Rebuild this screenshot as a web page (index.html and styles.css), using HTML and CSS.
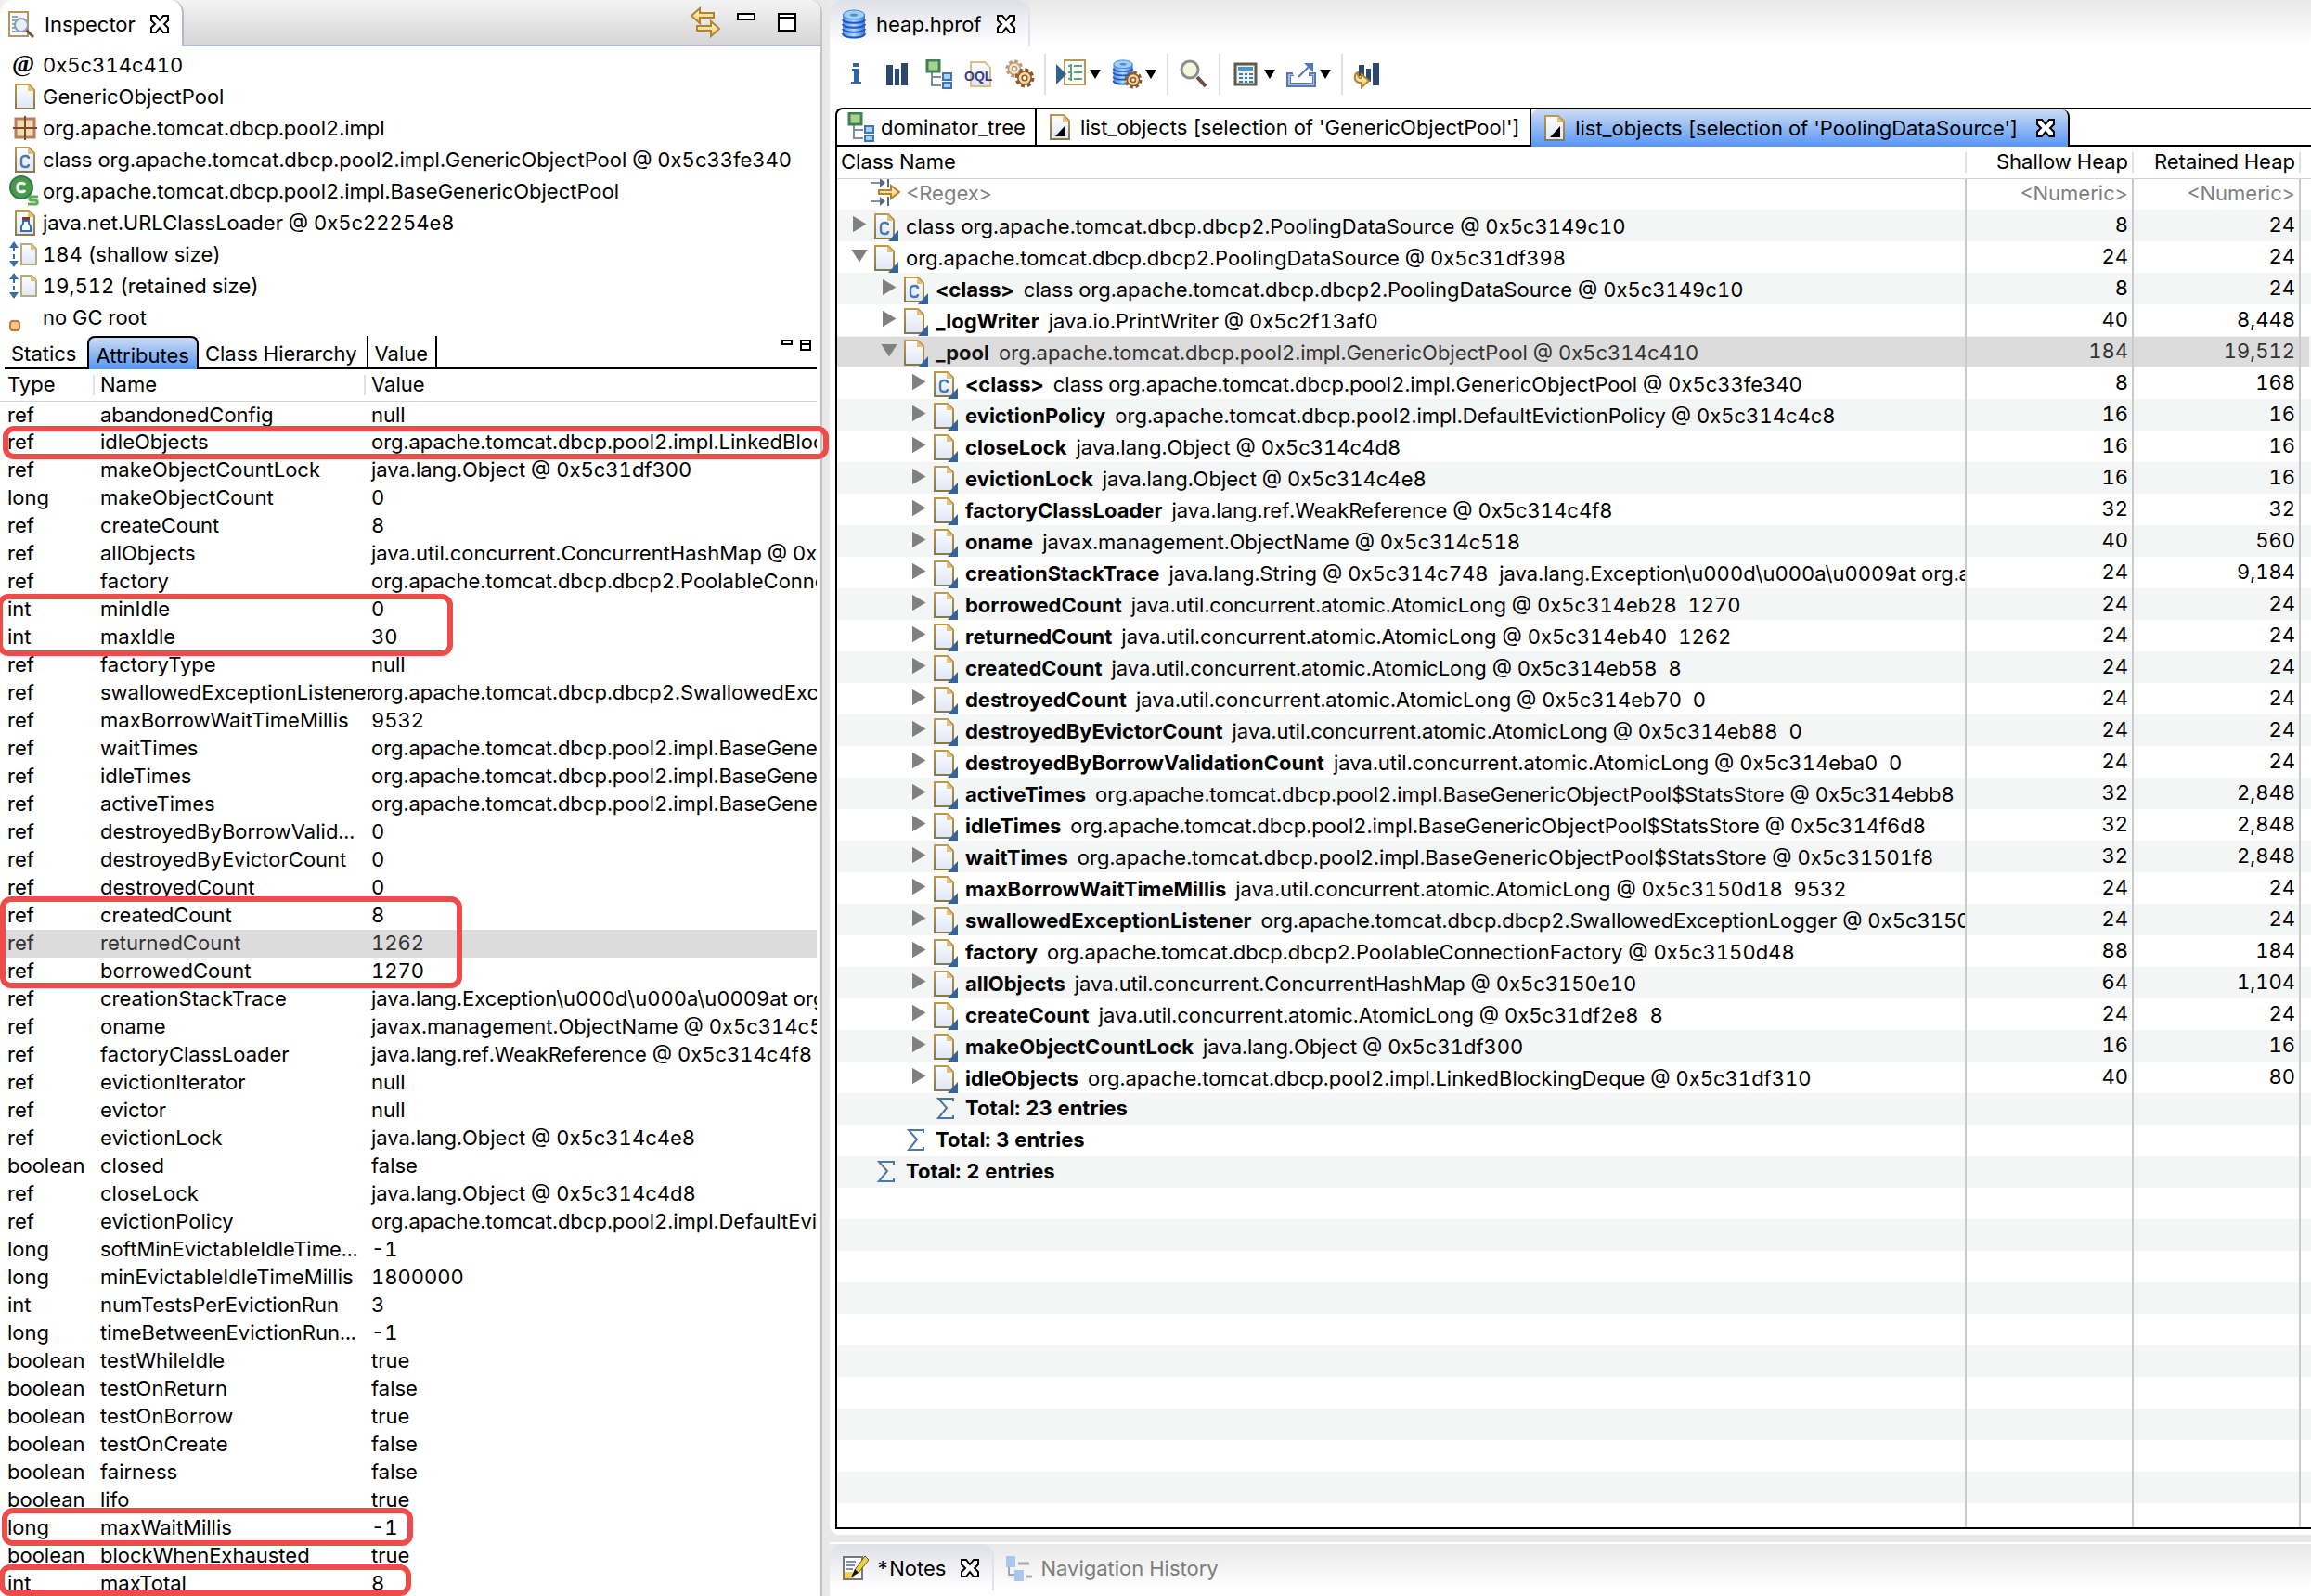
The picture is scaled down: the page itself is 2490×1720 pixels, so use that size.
FILE: index.html
```
<!DOCTYPE html>
<html lang="en">
<head>
<meta charset="utf-8">
<title>Memory Analyzer - heap.hprof</title>
<link rel="stylesheet" href="styles.css">
</head>
<body>
<svg class="sprite" aria-hidden="true">
  <defs>
    <linearGradient id="g-page" x1="0" y1="0" x2="0" y2="1"><stop offset="0" stop-color="#fdfdff"/><stop offset="1" stop-color="#dfe6f5"/></linearGradient>
    <linearGradient id="g-edge" x1="0" y1="0" x2="0" y2="1"><stop offset="0" stop-color="#bd9a4a"/><stop offset="1" stop-color="#85794f"/></linearGradient>
    <linearGradient id="g-gold" x1="0" y1="0" x2="0" y2="1"><stop offset="0" stop-color="#fffbe6"/><stop offset="1" stop-color="#efc75e"/></linearGradient>
    <linearGradient id="g-db" x1="0" y1="0" x2="1" y2="0"><stop offset="0" stop-color="#4e8fe0"/><stop offset=".5" stop-color="#b4dcf6"/><stop offset="1" stop-color="#3a78d6"/></linearGradient>
    <symbol id="doc" viewBox="0 0 32 32"><path d="M7 3h14l6 6v20H7z" fill="url(#g-page)" stroke="url(#g-edge)" stroke-width="2"/><path d="M20 3v7h7z" fill="#e2c27a"/></symbol>
    <symbol id="letter-c" viewBox="0 0 32 32"><path d="M21 15c0-2-1-3-3-3h-1c-3 0-4 2-4 4v4c0 3 1 4 4 4h1c2 0 3-1 3-3" fill="none" stroke="#4a7ab5" stroke-width="2.4"/></symbol>
    <symbol id="out" viewBox="0 0 32 32"><path d="M32 20v12H21z" fill="#35639b"/></symbol>
    <symbol id="ref-doc" viewBox="0 0 32 32"><use href="#doc"/><use href="#out"/></symbol>
    <symbol id="class-doc" viewBox="0 0 32 32"><use href="#doc"/><use href="#letter-c"/></symbol>
    <symbol id="ref-class" viewBox="0 0 32 32"><use href="#class-doc"/><use href="#out"/></symbol>
    <symbol id="sum" viewBox="0 0 32 32"><path d="M27 9V6H11l9 10-9 11h16v-3" fill="none" stroke="#4a76a8" stroke-width="2"/></symbol>
    <symbol id="query-doc" viewBox="0 0 32 32"><use href="#doc"/><path d="M23 14v12H12z" fill="#000"/></symbol>
    <symbol id="close" viewBox="0 0 20 20"><path d="M1 1h5l4 5 4-5h5v5l-4 4 4 4v5h-5l-4-5-4 5H1v-5l4-4-4-4z" fill="#fff" stroke="#000" stroke-width="2"/></symbol>
    <symbol id="db" viewBox="0 0 32 32"><path d="M4 5v22c0 6 24 6 24 0V5z" fill="url(#g-db)"/><path d="M4 11c0 5 24 5 24 0M4 16c0 5 24 5 24 0M4 21c0 5 24 5 24 0M4 26c0 6 24 6 24 0" fill="none" stroke="#1f55c4" stroke-width="2"/><ellipse cx="16" cy="6" rx="11.500" ry="5" fill="#9fd0f2" stroke="#3c7fd8"/><ellipse cx="16" cy="6" rx="4" ry="1.500" fill="#4f8cc0"/></symbol>
    <symbol id="tree" viewBox="0 0 32 32"><path d="M10 13v15h10M10 19h10" fill="none" stroke="#7f8da3" stroke-width="2"/><path d="M5 1h13v12H5z" fill="#a9d18e" stroke="#3f8157" stroke-width="3"/><path d="M22 15h9v7h-9zM22 25h9v6h-9z" fill="#a5d3f5" stroke="#3f74bb" stroke-width="2"/></symbol>
    <symbol id="gear" viewBox="0 0 20 20"><circle cx="10" cy="10" r="8" fill="none" stroke="#8a5a2c" stroke-width="3" stroke-dasharray="3.600 2.680"/><circle cx="10" cy="10" r="6.500" fill="#f7d795" stroke="#8a5a2c" stroke-width="1.500"/><circle cx="10" cy="10" r="2.500" fill="#fff" stroke="#8a5a2c" stroke-width="1.500"/></symbol>
    <symbol id="size" viewBox="0 0 32 32"><path d="M5 8v16" stroke="#3c6ea5" stroke-width="2" stroke-dasharray="5 3"/><path d="M5 2l5 7H0zM5 30l5-7H0z" fill="#3c6ea5"/><path d="M13 5h11l5 5v17H13z" fill="url(#g-page)" stroke="#b5ab85" stroke-width="2"/><path d="M23 4v7h7z" fill="#e2c27a"/></symbol>
    <symbol id="bars" viewBox="0 0 32 32"><path d="M5 6h7v22H5zM14 10h5v18h-5zM21 4h7v24h-7z" fill="#2c4870"/></symbol>
  </defs>
</svg>

<main class="workbench">
  <section class="view inspector" aria-label="Inspector">
    <header class="view-bar">
      <div class="view-tab active">
        <svg class="icon" viewBox="0 0 32 32"><path d="M2 3h20v26H2z" fill="#f4f8ff" stroke="#b8974c" stroke-width="2"/><path d="M5 8h6M5 12h4M5 16h3M5 20h5M5 24h9" stroke="#8aa6d6" stroke-width="2"/><path d="M20 22l8 8" stroke="#7b4b3a" stroke-width="3"/><circle cx="15" cy="17" r="7" fill="#e6eef8" stroke="#8f9bab" stroke-width="2"/></svg>
        <span>Inspector</span>
        <button class="close" aria-label="Close"><svg viewBox="0 0 20 20"><use href="#close"/></svg></button>
      </div>
      <div class="view-tools">
        <button aria-label="Link with snapshot"><svg class="icon" viewBox="0 0 32 32"><path d="M1 9l9-8v5h15v5H10v6z" fill="url(#g-gold)" stroke="#b5832f" stroke-width="2"/><path d="M31 23l-9-8v5H7v5h15v6z" fill="url(#g-gold)" stroke="#b5832f" stroke-width="2"/></svg></button>
        <button aria-label="Minimize"><svg class="glyph" viewBox="0 0 20 20"><path d="M1 1h18v6H1z" fill="#fff" stroke="#000" stroke-width="2"/></svg></button>
        <button aria-label="Maximize"><svg class="glyph" viewBox="0 0 20 20"><path d="M1 1h18v18H1zM1 5h18" fill="#fff" stroke="#000" stroke-width="2"/></svg></button>
      </div>
    </header>

    <ul class="facts">
      <li><svg class="icon" viewBox="0 0 32 32"><text x="3" y="23" class="at">@</text></svg>0x5c314c410</li>
      <li><svg class="icon"><use href="#doc"/></svg>GenericObjectPool</li>
      <li><svg class="icon" viewBox="0 0 32 32"><path d="M7 6h20v20H7z" fill="#f3dcb0" stroke="#b97f5c" stroke-width="3"/><path d="M17 3v26M4 16h26" stroke="#7c4a35" stroke-width="2"/></svg>org.apache.tomcat.dbcp.pool2.impl</li>
      <li><svg class="icon"><use href="#class-doc"/></svg>class org.apache.tomcat.dbcp.pool2.impl.GenericObjectPool @ 0x5c33fe340</li>
      <li><svg class="icon" viewBox="0 0 32 32"><circle cx="13" cy="12" r="12" fill="#4a9a4c" stroke="#2d7a4a" stroke-width="2"/><path d="M17 9c-1-2-7-3-8 1v4c1 4 7 3 8 1" fill="none" stroke="#fff" stroke-width="3"/><path d="M31 22h-7c-3 0-3 4 0 4h4c3 0 3 4 0 4h-8" fill="none" stroke="#5cae55" stroke-width="3"/></svg>org.apache.tomcat.dbcp.pool2.impl.BaseGenericObjectPool</li>
      <li><svg class="icon" viewBox="0 0 32 32"><use href="#doc"/><path d="M14 10h8v3h-8z" fill="#7c3a1e"/><path d="M15 14v3l-2 3v5h10v-5l-2-3v-3z" fill="#fff" stroke="#3a6eb0" stroke-width="2"/></svg>java.net.URLClassLoader @ 0x5c22254e8</li>
      <li><svg class="icon"><use href="#size"/></svg>184 (shallow size)</li>
      <li><svg class="icon"><use href="#size"/></svg>19,512 (retained size)</li>
      <li><svg class="icon" viewBox="0 0 32 32"><rect x="1" y="20" width="10" height="10" rx="3" fill="#f8c890" stroke="#c07a30" stroke-width="2"/></svg>no GC root</li>
    </ul>

    <nav class="sub-tabs" role="tablist">
      <button role="tab">Statics</button>
      <button role="tab" class="selected" aria-selected="true">Attributes</button>
      <button role="tab">Class Hierarchy</button>
      <button role="tab" class="ruled">Value</button>
      <span class="sub-tools">
        <button aria-label="Minimize"><svg viewBox="0 0 12 12"><path d="M1 1h10v4H1z" fill="#fff" stroke="#000" stroke-width="2"/></svg></button>
        <button aria-label="Maximize"><svg viewBox="0 0 12 12"><path d="M1 1h10v10H1zM1 5h10" fill="#fff" stroke="#000" stroke-width="2"/></svg></button>
      </span>
    </nav>

    <div class="attributes">
      <table class="fields">
        <colgroup><col class="c-type"><col class="c-name"><col></colgroup>
        <thead><tr><th>Type</th><th>Name</th><th>Value</th></tr></thead>
        <tbody>
          <tr><td>ref<td>abandonedConfig<td>null
          <tr><td>ref<td>idleObjects<td>org.apache.tomcat.dbcp.pool2.impl.LinkedBlockingDeque
          <tr><td>ref<td>makeObjectCountLock<td>java.lang.Object @ 0x5c31df300
          <tr><td>long<td>makeObjectCount<td>0
          <tr><td>ref<td>createCount<td>8
          <tr><td>ref<td>allObjects<td>java.util.concurrent.ConcurrentHashMap @ 0x5c3150e10
          <tr><td>ref<td>factory<td>org.apache.tomcat.dbcp.dbcp2.PoolableConnectionFactory
          <tr><td>int<td>minIdle<td>0
          <tr><td>int<td>maxIdle<td>30
          <tr><td>ref<td>factoryType<td>null
          <tr><td>ref<td>swallowedExceptionListener<td>org.apache.tomcat.dbcp.dbcp2.SwallowedExceptionLogger
          <tr><td>ref<td>maxBorrowWaitTimeMillis<td>9532
          <tr><td>ref<td>waitTimes<td>org.apache.tomcat.dbcp.pool2.impl.BaseGenericObjectPool
          <tr><td>ref<td>idleTimes<td>org.apache.tomcat.dbcp.pool2.impl.BaseGenericObjectPool
          <tr><td>ref<td>activeTimes<td>org.apache.tomcat.dbcp.pool2.impl.BaseGenericObjectPool
          <tr><td>ref<td>destroyedByBorrowValid...<td>0
          <tr><td>ref<td>destroyedByEvictorCount<td>0
          <tr><td>ref<td>destroyedCount<td>0
          <tr><td>ref<td>createdCount<td>8
          <tr class="selected"><td>ref<td>returnedCount<td>1262
          <tr><td>ref<td>borrowedCount<td>1270
          <tr><td>ref<td>creationStackTrace<td>java.lang.Exception\u000d\u000a\u0009at org.apache
          <tr><td>ref<td>oname<td>javax.management.ObjectName @ 0x5c314c518
          <tr><td>ref<td>factoryClassLoader<td>java.lang.ref.WeakReference @ 0x5c314c4f8
          <tr><td>ref<td>evictionIterator<td>null
          <tr><td>ref<td>evictor<td>null
          <tr><td>ref<td>evictionLock<td>java.lang.Object @ 0x5c314c4e8
          <tr><td>boolean<td>closed<td>false
          <tr><td>ref<td>closeLock<td>java.lang.Object @ 0x5c314c4d8
          <tr><td>ref<td>evictionPolicy<td>org.apache.tomcat.dbcp.pool2.impl.DefaultEvictionPolicy
          <tr><td>long<td>softMinEvictableIdleTime...<td>-1
          <tr><td>long<td>minEvictableIdleTimeMillis<td>1800000
          <tr><td>int<td>numTestsPerEvictionRun<td>3
          <tr><td>long<td>timeBetweenEvictionRun...<td>-1
          <tr><td>boolean<td>testWhileIdle<td>true
          <tr><td>boolean<td>testOnReturn<td>false
          <tr><td>boolean<td>testOnBorrow<td>true
          <tr><td>boolean<td>testOnCreate<td>false
          <tr><td>boolean<td>fairness<td>false
          <tr><td>boolean<td>lifo<td>true
          <tr><td>long<td>maxWaitMillis<td>-1
          <tr><td>boolean<td>blockWhenExhausted<td>true
          <tr><td>int<td>maxTotal<td>8
        </tbody>
      </table>
      <div class="mark mark-idle-objects"></div>
      <div class="mark mark-idle-limits"></div>
      <div class="mark mark-counts"></div>
      <div class="mark mark-wait"></div>
      <div class="mark mark-total"></div>
    </div>
  </section>

  <div class="stack">
    <section class="view editor" aria-label="heap.hprof">
      <header class="pale-bar">
        <div class="pale-tab">
          <svg class="icon"><use href="#db"/></svg>
          <span>heap.hprof</span>
          <button class="close" aria-label="Close"><svg viewBox="0 0 20 20"><use href="#close"/></svg></button>
        </div>
      </header>

      <div class="toolbar" role="toolbar">
        <button aria-label="Overview"><svg class="icon" viewBox="0 0 32 32"><path d="M13 4h6v4h-6zM12 10h7v14h3v2H11v-2h3V12h-2z" fill="#2c66a5"/></svg></button>
        <button aria-label="Histogram"><svg class="icon"><use href="#bars"/></svg></button>
        <button aria-label="Dominator tree"><svg class="icon"><use href="#tree"/></svg></button>
        <button aria-label="OQL"><svg class="icon" viewBox="0 0 32 32"><path d="M8 3h15l6 6v20H8z" fill="url(#g-page)" stroke="#d8bf85" stroke-width="2"/><text x="1" y="23" class="oql">OQL</text></svg></button>
        <button aria-label="Thread overview"><svg class="icon" viewBox="0 0 32 32"><g opacity=".6"><use href="#gear" x="1" y="0" width="20" height="20"/></g><use href="#gear" x="11" y="9" width="22" height="22"/></svg></button>
        <i class="rule"></i>
        <div class="drop">
          <button aria-label="Run report"><svg class="icon" viewBox="0 0 32 32"><path d="M9 1h22v26H9z" fill="#fff" stroke="#b09a5c" stroke-width="2"/><path d="M13 7h4m2 0h9M13 14h4m2 0h9M13 21h4m2 0h9M16 5v18" stroke="#5ea574" stroke-width="2"/><path d="M0 5v22l11-11z" fill="#2f6290"/></svg></button>
          <button class="caret" aria-label="More reports"></button>
        </div>
        <div class="drop">
          <button aria-label="Query browser"><svg class="icon" viewBox="0 0 32 32"><use href="#db" x="-3" y="0" width="30" height="28"/><use href="#gear" x="13" y="12" width="20" height="20"/></svg></button>
          <button class="caret" aria-label="More queries"></button>
        </div>
        <i class="rule"></i>
        <button aria-label="Find object"><svg class="icon" viewBox="0 0 32 32"><path d="M20 19l9 10" stroke="#6b4a40" stroke-width="4"/><circle cx="12" cy="11" r="9" fill="#f7f5dc" stroke="#8b8f8d" stroke-width="3"/></svg></button>
        <i class="rule"></i>
        <div class="drop">
          <button aria-label="Calculate retained size"><svg class="icon" viewBox="0 0 32 32"><path d="M5 5h22v22H5z" fill="#e8f3f8" stroke="#5f5b4a" stroke-width="3"/><path d="M8 10h16" stroke="#4f94b8" stroke-width="4"/><path d="M9 16h4m2 0h3m2 0h4M9 20h4m2 0h3m2 0h4M9 24h4m2 0h3m2 0h4" stroke="#3f7ba0" stroke-width="2"/></svg></button>
          <button class="caret" aria-label="More calculations"></button>
        </div>
        <div class="drop">
          <button aria-label="Export"><svg class="icon" viewBox="0 0 32 32"><path d="M7 15H1v14h30V15h-6v3h3v7H5v-7h3" fill="#a9bfe2" stroke="#5a79b3" stroke-width="2"/><path d="M5 18h23v7H5z" fill="#fff"/><path d="M13 19L26 6" stroke="#4d7ab5" stroke-width="2"/><path d="M19 4h10v10z" fill="#4d7ab5"/></svg></button>
          <button class="caret" aria-label="More exports"></button>
        </div>
        <i class="rule"></i>
        <button aria-label="Compare histogram"><svg class="icon" viewBox="0 0 32 32"><path d="M6 6h6v12H6zM14 10h5v14h-5zM21 4h7v24h-7z" fill="#2c4870"/><path d="M5 14c-4 2-5 9 1 11h3v5l8-7-8-7v4H7c-2-1-2-4-2-6z" fill="url(#g-gold)" stroke="#b5832f" stroke-width="2"/></svg></button>
      </div>

      <div class="folder">
        <div class="folder-tabs" role="tablist">
          <button role="tab"><svg class="icon"><use href="#tree"/></svg><span>dominator_tree</span></button>
          <button role="tab"><svg class="icon"><use href="#query-doc"/></svg><span>list_objects [selection of 'GenericObjectPool']</span></button>
          <button role="tab" class="selected" aria-selected="true"><svg class="icon"><use href="#query-doc"/></svg><span>list_objects [selection of 'PoolingDataSource']</span><svg class="x" viewBox="0 0 20 20"><use href="#close"/></svg></button>
        </div>
        <div class="grid">
          <table class="heap">
            <colgroup><col><col class="c-num"><col class="c-num"><col class="c-end"></colgroup>
            <thead>
              <tr><th>Class Name</th><th>Shallow Heap</th><th>Retained Heap</th><th></th></tr>
              <tr class="filter">
                <td><label class="node"><svg class="icon" viewBox="0 0 32 32"><path d="M2 5h14M2 25h14" stroke="#7f93a8" stroke-width="2"/><path d="M12 0l6 5-6 5zM12 20l6 5-6 5z" fill="#56697f"/><path d="M21 0v10M21 20v10" stroke="#56697f" stroke-width="2"/><path d="M11 13h13V8l9 7-9 7v-5H11z" fill="url(#g-gold)" stroke="#b5832f" stroke-width="2"/></svg><input placeholder="&lt;Regex&gt;" aria-label="Class name filter"></label></td>
                <td><input placeholder="&lt;Numeric&gt;" aria-label="Shallow heap filter"></td>
                <td><input placeholder="&lt;Numeric&gt;" aria-label="Retained heap filter"></td>
                <td></td>
              </tr>
            </thead>
            <tbody>
              <tr><td><div class="node"><button class="twist"></button><svg class="icon"><use href="#ref-class"/></svg>class org.apache.tomcat.dbcp.dbcp2.PoolingDataSource @ 0x5c3149c10</div><td>8<td>24<td>
              <tr><td><div class="node"><button class="twist open"></button><svg class="icon"><use href="#ref-doc"/></svg>org.apache.tomcat.dbcp.dbcp2.PoolingDataSource @ 0x5c31df398</div><td>24<td>24<td>
              <tr><td><div class="node l1"><button class="twist"></button><svg class="icon"><use href="#ref-class"/></svg><b>&lt;class&gt;</b>class org.apache.tomcat.dbcp.dbcp2.PoolingDataSource @ 0x5c3149c10</div><td>8<td>24<td>
              <tr><td><div class="node l1"><button class="twist"></button><svg class="icon"><use href="#ref-doc"/></svg><b>_logWriter</b>java.io.PrintWriter @ 0x5c2f13af0</div><td>40<td>8,448<td>
              <tr class="selected"><td><div class="node l1"><button class="twist open"></button><svg class="icon"><use href="#ref-doc"/></svg><b>_pool</b>org.apache.tomcat.dbcp.pool2.impl.GenericObjectPool @ 0x5c314c410</div><td>184<td>19,512<td>
              <tr><td><div class="node l2"><button class="twist"></button><svg class="icon"><use href="#ref-class"/></svg><b>&lt;class&gt;</b>class org.apache.tomcat.dbcp.pool2.impl.GenericObjectPool @ 0x5c33fe340</div><td>8<td>168<td>
              <tr><td><div class="node l2"><button class="twist"></button><svg class="icon"><use href="#ref-doc"/></svg><b>evictionPolicy</b>org.apache.tomcat.dbcp.pool2.impl.DefaultEvictionPolicy @ 0x5c314c4c8</div><td>16<td>16<td>
              <tr><td><div class="node l2"><button class="twist"></button><svg class="icon"><use href="#ref-doc"/></svg><b>closeLock</b>java.lang.Object @ 0x5c314c4d8</div><td>16<td>16<td>
              <tr><td><div class="node l2"><button class="twist"></button><svg class="icon"><use href="#ref-doc"/></svg><b>evictionLock</b>java.lang.Object @ 0x5c314c4e8</div><td>16<td>16<td>
              <tr><td><div class="node l2"><button class="twist"></button><svg class="icon"><use href="#ref-doc"/></svg><b>factoryClassLoader</b>java.lang.ref.WeakReference @ 0x5c314c4f8</div><td>32<td>32<td>
              <tr><td><div class="node l2"><button class="twist"></button><svg class="icon"><use href="#ref-doc"/></svg><b>oname</b>javax.management.ObjectName @ 0x5c314c518</div><td>40<td>560<td>
              <tr><td><div class="node l2"><button class="twist"></button><svg class="icon"><use href="#ref-doc"/></svg><b>creationStackTrace</b>java.lang.String @ 0x5c314c748&nbsp; java.lang.Exception\u000d\u000a\u0009at org.apache</div><td>24<td>9,184<td>
              <tr><td><div class="node l2"><button class="twist"></button><svg class="icon"><use href="#ref-doc"/></svg><b>borrowedCount</b>java.util.concurrent.atomic.AtomicLong @ 0x5c314eb28&nbsp; 1270</div><td>24<td>24<td>
              <tr><td><div class="node l2"><button class="twist"></button><svg class="icon"><use href="#ref-doc"/></svg><b>returnedCount</b>java.util.concurrent.atomic.AtomicLong @ 0x5c314eb40&nbsp; 1262</div><td>24<td>24<td>
              <tr><td><div class="node l2"><button class="twist"></button><svg class="icon"><use href="#ref-doc"/></svg><b>createdCount</b>java.util.concurrent.atomic.AtomicLong @ 0x5c314eb58&nbsp; 8</div><td>24<td>24<td>
              <tr><td><div class="node l2"><button class="twist"></button><svg class="icon"><use href="#ref-doc"/></svg><b>destroyedCount</b>java.util.concurrent.atomic.AtomicLong @ 0x5c314eb70&nbsp; 0</div><td>24<td>24<td>
              <tr><td><div class="node l2"><button class="twist"></button><svg class="icon"><use href="#ref-doc"/></svg><b>destroyedByEvictorCount</b>java.util.concurrent.atomic.AtomicLong @ 0x5c314eb88&nbsp; 0</div><td>24<td>24<td>
              <tr><td><div class="node l2"><button class="twist"></button><svg class="icon"><use href="#ref-doc"/></svg><b>destroyedByBorrowValidationCount</b>java.util.concurrent.atomic.AtomicLong @ 0x5c314eba0&nbsp; 0</div><td>24<td>24<td>
              <tr><td><div class="node l2"><button class="twist"></button><svg class="icon"><use href="#ref-doc"/></svg><b>activeTimes</b>org.apache.tomcat.dbcp.pool2.impl.BaseGenericObjectPool$StatsStore @ 0x5c314ebb8</div><td>32<td>2,848<td>
              <tr><td><div class="node l2"><button class="twist"></button><svg class="icon"><use href="#ref-doc"/></svg><b>idleTimes</b>org.apache.tomcat.dbcp.pool2.impl.BaseGenericObjectPool$StatsStore @ 0x5c314f6d8</div><td>32<td>2,848<td>
              <tr><td><div class="node l2"><button class="twist"></button><svg class="icon"><use href="#ref-doc"/></svg><b>waitTimes</b>org.apache.tomcat.dbcp.pool2.impl.BaseGenericObjectPool$StatsStore @ 0x5c31501f8</div><td>32<td>2,848<td>
              <tr><td><div class="node l2"><button class="twist"></button><svg class="icon"><use href="#ref-doc"/></svg><b>maxBorrowWaitTimeMillis</b>java.util.concurrent.atomic.AtomicLong @ 0x5c3150d18&nbsp; 9532</div><td>24<td>24<td>
              <tr><td><div class="node l2"><button class="twist"></button><svg class="icon"><use href="#ref-doc"/></svg><b>swallowedExceptionListener</b>org.apache.tomcat.dbcp.dbcp2.SwallowedExceptionLogger @ 0x5c3150d30</div><td>24<td>24<td>
              <tr><td><div class="node l2"><button class="twist"></button><svg class="icon"><use href="#ref-doc"/></svg><b>factory</b>org.apache.tomcat.dbcp.dbcp2.PoolableConnectionFactory @ 0x5c3150d48</div><td>88<td>184<td>
              <tr><td><div class="node l2"><button class="twist"></button><svg class="icon"><use href="#ref-doc"/></svg><b>allObjects</b>java.util.concurrent.ConcurrentHashMap @ 0x5c3150e10</div><td>64<td>1,104<td>
              <tr><td><div class="node l2"><button class="twist"></button><svg class="icon"><use href="#ref-doc"/></svg><b>createCount</b>java.util.concurrent.atomic.AtomicLong @ 0x5c31df2e8&nbsp; 8</div><td>24<td>24<td>
              <tr><td><div class="node l2"><button class="twist"></button><svg class="icon"><use href="#ref-doc"/></svg><b>makeObjectCountLock</b>java.lang.Object @ 0x5c31df300</div><td>16<td>16<td>
              <tr><td><div class="node l2"><button class="twist"></button><svg class="icon"><use href="#ref-doc"/></svg><b>idleObjects</b>org.apache.tomcat.dbcp.pool2.impl.LinkedBlockingDeque @ 0x5c31df310</div><td>40<td>80<td>
              <tr><td><div class="node total l2"><svg class="icon"><use href="#sum"/></svg><b>Total: 23 entries</b></div><td><td><td>
              <tr><td><div class="node total l1"><svg class="icon"><use href="#sum"/></svg><b>Total: 3 entries</b></div><td><td><td>
              <tr><td><div class="node total"><svg class="icon"><use href="#sum"/></svg><b>Total: 2 entries</b></div><td><td><td>
            </tbody>
          </table>
        </div>
      </div>
    </section>

    <section class="notes" aria-label="Notes">
      <header class="pale-bar">
        <div class="pale-tab">
          <svg class="icon" viewBox="0 0 32 32"><path d="M5 4h20v24H5z" fill="#fff" stroke="#777" stroke-width="2"/><path d="M8 9h10M8 13h9M8 17h7" stroke="#7a8fc0" stroke-width="2"/><path d="M6 20h9v7H6z" fill="#f5d25a"/><path d="M17 18L28 3l4 4-11 14z" fill="#f0cf3c" stroke="#5a5340"/><path d="M17 17l4 4-8 5z" fill="#111"/></svg>
          <span>*Notes</span>
          <button class="close" aria-label="Close"><svg viewBox="0 0 20 20"><use href="#close"/></svg></button>
        </div>
        <div class="pale-tab idle">
          <svg class="icon" viewBox="0 0 32 32"><path d="M6 15v8h6" fill="none" stroke="#9aa8bd" stroke-width="2"/><path d="M3 3h10v12H3zM12 18h10v12H12z" fill="#a9c6ec"/><path d="M16 11h12M25 25h6" stroke="#aaa" stroke-width="3"/></svg>
          <span>Navigation History</span>
        </div>
      </header>
    </section>
  </div>
</main>
</body>
</html>
```
FILE: styles.css
```
* { box-sizing: border-box; }

body {
  margin: 0;
  height: 100vh;
  overflow: hidden;
  background: #e8e8e8;
  color: #000;
  font: 22px/30px Inter, "Liberation Sans", sans-serif;
  font-variant-numeric: tabular-nums;
}

button {
  display: flex;
  align-items: center;
  padding: 0;
  border: 0;
  background: none;
  color: inherit;
  font: inherit;
}

.sprite { position: absolute; width: 0; height: 0; }
.icon { flex: none; display: block; width: 32px; height: 32px; overflow: visible; }
.at { font: bold 26px "Liberation Serif", serif; }
.oql { font: bold 14px "Liberation Sans", sans-serif; fill: #3b3b8c; }

.workbench {
  display: grid;
  grid-template-columns: minmax(0, 886fr) minmax(0, 1596fr);
  grid-template-rows: 100%;
  gap: 8px;
  height: 100vh;
}

.view { background: #fff; }

/* Inspector */
.inspector { border-right: 2px solid #c4c4c2; border-top-right-radius: 14px; }

.view-bar {
  display: flex;
  justify-content: space-between;
  height: 50px;
  border-bottom: 2px solid #b3bacd;
  border-top-right-radius: 12px;
  background: linear-gradient(#f3f3f3, #d6d6d6);
}

.view-tab {
  display: flex;
  align-items: center;
  gap: 8px;
  height: 50px;
  padding: 2px 14px 0 8px;
  border: 2px solid #b3bacd;
  border-width: 0 2px 0 0;
  border-radius: 14px 14px 0 0;
  background: #fff;
}

.close { margin-left: 8px; }
.close svg, .x { display: block; width: 20px; height: 20px; }

.view-tools { display: flex; align-items: flex-start; padding: 8px 26px 0 0; }
.view-tools button + button { margin: 6px 0 0 18px; }
.view-tools button + button + button { margin-left: 24px; }
.glyph { display: block; width: 20px; height: 20px; }

.facts { margin: 0; padding: 3px 0 0 10px; list-style: none; }
.facts li { display: flex; align-items: center; gap: 4px; height: 34px; white-space: nowrap; }

.sub-tabs {
  display: flex;
  height: 39px;
  margin: 0 4px 0 5px;
  padding-top: 3px;
  border-bottom: 2px solid #000;
}
.sub-tabs > button { padding: 4px 8px 0 7px; }
.sub-tabs > .selected {
  margin: 0 0 -2px 4px;
  border: 2px solid #000;
  border-bottom: 0;
  border-radius: 8px 8px 0 0;
  background: linear-gradient(#cddcf4, #5596f2);
}
.sub-tabs > .ruled { margin-left: 2px; border: 2px solid #000; border-width: 0 2px; }
.sub-tools { display: flex; align-items: flex-start; gap: 8px; margin-left: auto; padding: 4px 6px 0 0; }
.sub-tools svg { display: block; width: 12px; height: 12px; }

.attributes { position: relative; }
.fields { width: calc(100% - 4px); border-collapse: collapse; table-layout: fixed; }
.c-type { width: 102px; }
.c-name { width: 292px; }
.fields th {
  height: 34px;
  padding: 0 0 2px 6px;
  border-bottom: 1px solid #d4d4d4;
  background: linear-gradient(#e2e2e2, #e2e2e2) 100% 6px / 2px 22px no-repeat;
  font-weight: 400;
  text-align: left;
}
.fields th:last-child { background: none; }
.fields td {
  height: 30px;
  padding: 0 0 0 6px;
  line-height: 28px;
  vertical-align: top;
  white-space: nowrap;
}
.fields td:last-child { overflow: hidden; }
.fields th:first-child, .fields td:first-child { padding-left: 8px; }
.fields .selected { background: #dcdcdc; color: #333; }

/* Annotation frames laid over the attribute rows */
.mark { position: absolute; border: 6px solid #ee4b4b; border-radius: 12px; }
.mark-idle-objects { left: 3px; right: -9px; top: 61px; height: 36px; }
.mark-idle-limits { left: -3px; width: 491px; top: 242px; height: 67px; }
.mark-counts { left: 0; width: 498px; top: 568px; height: 99px; }
.mark-wait { left: 2px; width: 443px; top: 1227px; height: 41px; }
.mark-total { left: -1px; width: 444px; top: 1288px; height: 34px; }

/* Editor */
.stack { display: flex; flex-direction: column; gap: 8px; min-width: 0; }
.editor {
  flex: 1;
  display: flex;
  flex-direction: column;
  min-height: 0;
  padding-bottom: 6px;
  border-bottom-left-radius: 10px;
}

.pale-bar { display: flex; height: 50px; background: linear-gradient(#e8e8e8, #fff 96%); }
.pale-tab {
  display: flex;
  align-items: center;
  gap: 8px;
  padding: 2px 14px 0 10px;
  border-right: 2px solid #e0e2ec;
  border-radius: 14px 14px 0 0;
  background: linear-gradient(#dfe0e8, #fff 96%);
}
.pale-tab.idle { border: 0; background: none; color: #7d7d7d; }

.toolbar { display: flex; gap: 12px; height: 66px; padding: 8px 0 14px 12px; }
.toolbar button { height: 44px; }
.rule { width: 2px; margin: 0 -1px; background: #e0e0e0; }
.drop { display: flex; gap: 4px; }
.caret::after {
  content: "";
  width: 12px;
  height: 10px;
  background: #000;
  clip-path: polygon(0 0, 100% 0, 50% 100%);
}

.folder {
  flex: 1;
  display: flex;
  flex-direction: column;
  min-height: 0;
  margin-left: 6px;
  border: 2px solid #000;
  border-right: 0;
  border-top-left-radius: 8px;
}
.folder-tabs { display: flex; flex: none; height: 40px; border-bottom: 2px solid #000; }
.folder-tabs button {
  gap: 7px;
  padding: 0 10px 0 8px;
  border-right: 2px solid #000;
  white-space: nowrap;
}
.folder-tabs .selected {
  height: 40px;
  padding-right: 14px;
  border-radius: 8px 8px 0 0;
  background: linear-gradient(#cddcf4, #5596f2);
}
.x { margin-left: 12px; }

/* Stripes and column rules continue below the last row */
.grid {
  flex: 1;
  min-height: 0;
  overflow: hidden;
  background:
    linear-gradient(#cbcbcb, #cbcbcb) right 371px top 34px / 2px 100% no-repeat,
    linear-gradient(#cbcbcb, #cbcbcb) right 191px top 34px / 2px 100% no-repeat,
    linear-gradient(#cbcbcb, #cbcbcb) right 11px top 34px / 2px 100% no-repeat,
    repeating-linear-gradient(#fff 0 34px, #f4f5f5 34px 68px) 0 34px;
}
.heap { width: 100%; border-collapse: collapse; table-layout: fixed; }
.c-num { width: 180px; }
.c-end { width: 11px; }
.heap th {
  height: 34px;
  padding: 0 6px 2px 5px;
  border-bottom: 1px solid #d4d4d4;
  background: linear-gradient(#e2e2e2, #e2e2e2) 100% 6px / 2px 22px no-repeat #fff;
  font-weight: 400;
  text-align: right;
  white-space: nowrap;
}
.heap th:first-child { padding-left: 4px; text-align: left; }
.heap th:last-child { background: #fff; }
.heap td { height: 34px; padding: 0 6px 4px 0; overflow: hidden; text-align: right; white-space: nowrap; }
.heap td:first-child { padding: 0 2px 0 0; text-align: left; }
.heap td:last-child { padding: 0; }
.heap .selected td { background: linear-gradient(#dcdcdc, #dcdcdc) 0 0 / calc(100% - 2px) 32px no-repeat; color: #333; }
.heap .selected b { color: #111; }

.node { display: flex; align-items: center; height: 34px; padding-left: 14px; overflow: hidden; }
.node.l1 { padding-left: 46px; }
.node.l2 { padding-left: 78px; }
.node .icon { margin-right: 8px; }
.node b { margin-right: 10px; font-weight: 700; }
.node.total, .filter .node { padding-bottom: 4px; }
.total .icon, .filter .icon { margin-left: 20px; }
.twist { flex: none; justify-content: center; width: 20px; height: 30px; }
.twist::before {
  content: "";
  width: 15px;
  height: 18px;
  margin-top: -4px;
  background: #808080;
  clip-path: polygon(0 0, 100% 50%, 0 100%);
}
.twist.open::before { width: 18px; height: 14px; clip-path: polygon(0 0, 100% 0, 50% 100%); }

.filter input {
  width: 100%;
  height: 30px;
  padding: 0;
  border: 0;
  background: none;
  color: inherit;
  font: inherit;
  text-align: inherit;
}
.filter input::placeholder { color: #808080; opacity: 1; }

.notes { flex: none; height: 58px; border-top: 2px solid #fff; background: #fff; }
```
